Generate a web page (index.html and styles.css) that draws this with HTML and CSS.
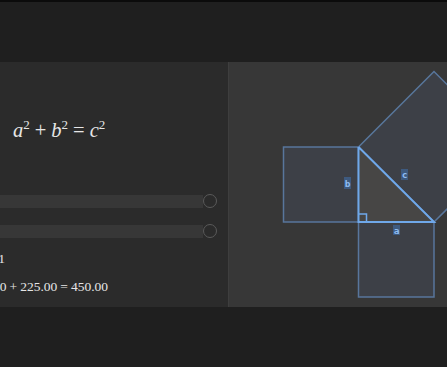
FILE: index.html
```html
<!DOCTYPE html>
<html>
<head>
<meta charset="utf-8">
<link rel="stylesheet" href="styles.css">
</head>
<body>
<div class="topline"></div>
<div class="header"></div>
<main class="main">
  <section class="left">
    <div class="formula"><i>a</i><sup>2</sup><span class="op">+</span><i>b</i><sup>2</sup><span class="op">=</span><i>c</i><sup>2</sup></div>
    <div class="sliders">
      <div class="slider"><div class="track"></div><div class="thumb"></div></div>
      <div class="slider"><div class="track"></div><div class="thumb"></div></div>
    </div>
    <div class="result l1"><i>c</i><span class="op">=</span>21.21</div>
    <div class="result l2">225.00<span class="op">+</span>225.00<span class="op">=</span>450.00</div>
  </section>
  <section class="right">
    <svg class="diagram" width="218" height="245" viewBox="0 0 218 245">
      <g class="sq">
        <rect x="54.5" y="85" width="75" height="75"/>
        <rect x="129.5" y="160" width="75.5" height="75"/>
        <polygon points="129.5,85 205,160 280.5,85 205,9.5"/>
      </g>
      <polygon class="tri" points="129.5,85 129.5,160 205,160"/>
      <polyline class="edge" points="129.5,85 129.5,160 205,160 129.5,85"/>
      <polyline class="right-mark" points="129.5,152 137.5,152 137.5,160"/>
      <g class="label">
        <rect x="115" y="115" width="7" height="12"/>
        <text x="118.5" y="124.5">b</text>
        <rect x="172" y="107" width="7" height="11"/>
        <text x="175.5" y="116">c</text>
        <rect x="164" y="163" width="7" height="10"/>
        <text x="167.5" y="171.5">a</text>
      </g>
    </svg>
  </section>
</main>
<div class="footer"></div>
</body>
</html>
```
FILE: styles.css
```css
html, body {
  margin: 0;
  padding: 0;
  background: #1f1f1f;
  width: 447px;
  height: 367px;
  overflow: hidden;
}
.topline {
  height: 2px;
  background: #0b0b0b;
}
.header {
  height: 60px;
}
.main {
  display: flex;
  height: 245px;
}
.left {
  width: 228px;
  background: #2b2b2b;
  border-right: 1px solid #3e3e3e;
  overflow: hidden;
  color: #e6e6e6;
  font-family: "Liberation Serif", serif;
}
.right {
  flex: 1;
  background: #373737;
  overflow: hidden;
}
.diagram {
  display: block;
}
.formula {
  margin: 54px 0 0 13px;
  height: 28px;
  line-height: 28px;
  font-size: 20.5px;
  white-space: nowrap;
}
.formula i {
  font-style: italic;
}
.formula sup {
  font-size: 13px;
  vertical-align: 8px;
  line-height: 0;
}
.op {
  margin: 0 5px;
}
.sliders {
  margin-top: 50px;
  display: flex;
  flex-direction: column;
  gap: 16px;
  padding-right: 11px;
}
.slider {
  display: flex;
  align-items: center;
  height: 14px;
}
.track {
  flex: 1;
  height: 13px;
  background: #373737;
}
.thumb {
  width: 12px;
  height: 12px;
  border: 1.5px solid #5a5a5a;
  border-radius: 50%;
  flex: none;
}
.result {
  font-size: 13.5px;
  white-space: nowrap;
  height: 28px;
  line-height: 28px;
  margin-left: -150px;
  text-align: right;
}
.l1 {
  margin-top: 7px;
  width: 155px;
}
.l2 {
  width: 258px;
}
.result .op {
  margin: 0 3px;
}
.sq rect, .sq polygon {
  fill: #3d4047;
  stroke: #58769c;
  stroke-width: 1.5;
}
.tri {
  fill: #474645;
}
.edge {
  fill: none;
  stroke: #6fa8ea;
  stroke-width: 2;
  stroke-linejoin: miter;
}
.right-mark {
  fill: none;
  stroke: #6fa8ea;
  stroke-width: 1.5;
}
.label rect {
  fill: #3e5a7f;
}
.label text {
  fill: #8fbdf2;
  font-family: "DejaVu Sans Mono", monospace;
  font-size: 9.5px;
  font-weight: bold;
  text-anchor: middle;
}
```
